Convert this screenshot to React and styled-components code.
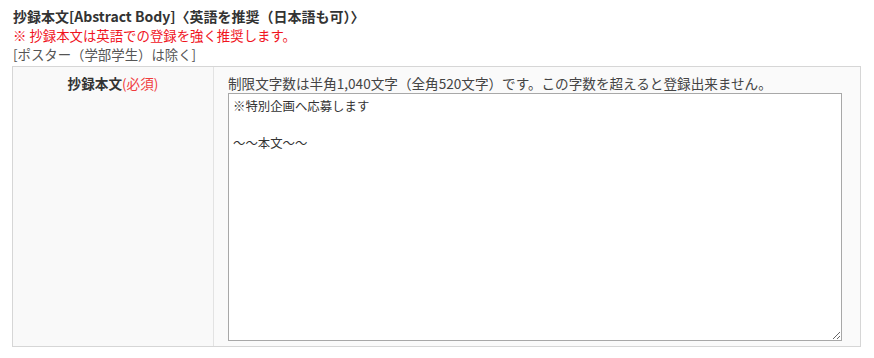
import styled, { createGlobalStyle } from 'styled-components';

const Global = createGlobalStyle`
  body {
    margin: 0;
    background: #fff;
    font-family: "Noto Sans CJK JP", "Noto Sans", sans-serif;
    font-size: 13.6px;
    color: #333;
  }
`;

const Page = styled.div`
  padding: 7px 14px 0 12px;
`;

const Heading = styled.div`
  font-size: 14px;
  font-weight: 700;
  line-height: 19px;
  color: #333;
  padding-left: 1px;
`;

const Note = styled.div`
  font-size: 13.4px;
  line-height: 19px;
  color: ${({ $red }) => ($red ? '#f0141e' : '#555')};
  padding-left: 1px;
`;

const Table = styled.div`
  margin-top: 2px;
  width: 847px;
  display: grid;
  grid-template-columns: 201px 1fr;
  border: 1px solid #d6d6d6;
  background: #f9f9f9;
`;

const Th = styled.div`
  text-align: center;
  font-weight: 700;
  line-height: 18px;
  padding-top: 7px;
  border-right: 1px solid #e3e3e3;
`;

const Required = styled.span`
  font-weight: 400;
  color: #f03c3c;
`;

const Td = styled.div`
  padding: 7px 18px 5px 14px;
  background: #fafafa;
  display: flex;
  flex-direction: column;
  gap: 1px;
`;

const Hint = styled.div`
  line-height: 18px;
  color: #444;
`;

const Area = styled.textarea`
  box-sizing: border-box;
  width: 100%;
  height: 248px;
  margin: 0;
  padding: 3px 4px;
  border: 1px solid #a8a8a8;
  border-radius: 0;
  font-family: "Noto Sans CJK JP", "Noto Sans", sans-serif;
  font-size: 12.4px;
  line-height: 18.5px;
  color: #333;
  background: #fff;
  resize: vertical;
`;

export default function App() {
  return (
    <Page>
      <Global />
      <Heading>抄録本文[Abstract Body]〈英語を推奨（日本語も可）〉</Heading>
      <Note $red>※ 抄録本文は英語での登録を強く推奨します。</Note>
      <Note>[ポスター（学部学生）は除く]</Note>
      <Table>
        <Th>
          抄録本文<Required>(必須)</Required>
        </Th>
        <Td>
          <Hint>制限文字数は半角1,040文字（全角520文字）です。この字数を超えると登録出来ません。</Hint>
          <Area defaultValue={'※特別企画へ応募します\n\n～～本文～～'} />
        </Td>
      </Table>
    </Page>
  );
}
